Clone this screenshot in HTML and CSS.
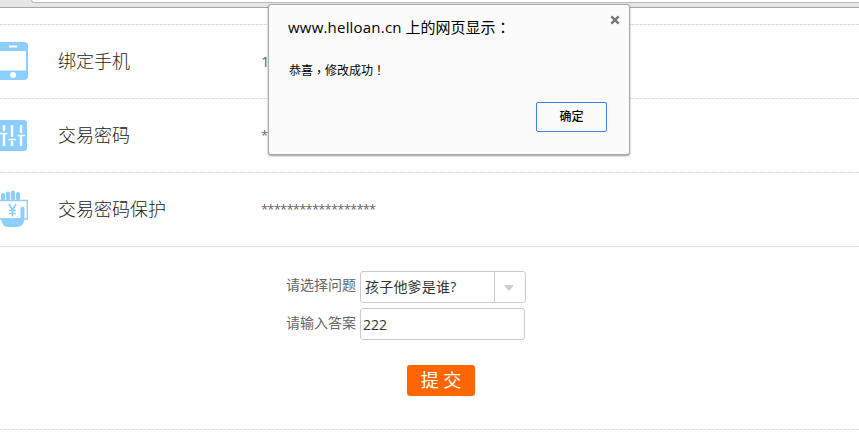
FILE: index.html
```html
<!DOCTYPE html>
<html lang="zh-CN">
<head>
<meta charset="utf-8">
<title>账户安全</title>
<link rel="stylesheet" href="styles.css">
</head>
<body>
<div class="toolbar"><div class="address"></div></div>
<main class="settings">
  <section class="row">
    <svg class="icon" width="28" height="40" viewBox="0 0 28 40">
      <path fill="#8ccfff" d="M0 1h24q4 0 4 4v30q0 4-4 4H0z"/>
      <path fill="#fff" d="M0 10h26v19.500H0zM9 4.500h8v2H9z"/>
      <circle cx="13" cy="34" r="3" fill="#fff"/>
    </svg>
    <h2 class="name">绑定手机</h2>
    <span class="value phone">138</span>
  </section>
  <section class="row">
    <svg class="icon" width="28" height="40" viewBox="0 0 28 40">
      <path fill="#8ccfff" d="M0 5h24q3 0 3 3v25q0 3-3 3H0z"/>
      <path stroke="#fff" stroke-width="2.400" fill="none" d="M4 10v6M4 19v12M12 10v12M12 26v5M21 10v8M21 21v10"/>
      <path stroke="#fff" stroke-width="1.500" fill="none" d="M0 18.500h7.500M8.500 24.500h7.500M17.500 20.500h7.500"/>
    </svg>
    <h2 class="name">交易密码</h2>
    <span class="value">******************</span>
  </section>
  <section class="row">
    <svg class="icon" width="28" height="40" viewBox="0 0 28 40">
      <path stroke="#8ccfff" stroke-width="4.200" stroke-linecap="round" d="M3 6v3.500M8 4.500v5M13 3.500v6M18 5v4.500"/>
      <path fill="#fff" stroke="#8ccfff" stroke-width="1.300" d="M-1 11.500h28.300v18.500H-1z"/>
      <path stroke="#8ccfff" stroke-width="1.700" fill="none" d="M9 15l3.500 6 3.500-6M12.500 21v6.500M9 21.500h7M9 24.500h7"/>
      <path fill="#8ccfff" d="M1 29.500h19.500V20q0-2.500 2-2.500t2 2.500v10q-1 8-8 8H8q-6 0-7-8.500z"/>
    </svg>
    <h2 class="name">交易密码保护</h2>
    <span class="value">******************</span>
  </section>
  <form class="question">
    <div class="field">
      <span class="label">请选择问题</span>
      <div class="select"><span class="choice">孩子他爹是谁?</span><span class="arrow"></span></div>
    </div>
    <div class="field">
      <span class="label low">请输入答案</span>
      <div class="answer">222</div>
    </div>
    <button class="submit" type="button">提 交</button>
  </form>
</main>
<div class="dialog">
  <svg class="close" width="10" height="10" viewBox="0 0 10 10"><path stroke="#777" stroke-width="2.400" d="M1.300 1.300l7.400 7.400M8.700 1.300L1.300 8.700"/></svg>
  <div class="title"><span class="host">www.helloan.cn</span> 上的网页显示<span class="mark" lang="zh-TW">：</span></div>
  <div class="message">恭喜<span class="mark comma" lang="zh-TW">，</span>修改成功<span class="mark" lang="zh-TW">！</span></div>
  <button class="ok" type="button">确定</button>
</div>
</body>
</html>
```
FILE: styles.css
```css
* { box-sizing: border-box; }
body {
  margin: 0;
  height: 440px;
  overflow: hidden;
  background: #fff;
  font-family: "Open Sans", "Noto Sans CJK SC", sans-serif;
  color: #333;
}
.toolbar {
  height: 8px;
  padding-left: 31px;
  background: #e6e6e6;
  border-bottom: 1px solid #a5a5a5;
}
.address {
  height: 3px;
  background: #fff;
  border: solid #bbb;
  border-width: 0 0 1px 1px;
  border-bottom-left-radius: 3px;
}
.settings { padding-top: 16px; }
.row {
  display: flex;
  align-items: center;
  height: 74px;
  background: repeating-linear-gradient(90deg, #dcdcdc 0 3px, #f3f3f3 3px 4px) top / 100% 1px no-repeat;
}
.icon { flex: none; }
.name {
  width: 203px;
  margin: 0 0 0 30px;
  font-size: 18px;
  font-weight: 300;
  line-height: 26px;
  color: #222;
}
.value {
  font-size: 13px;
  line-height: 20px;
  letter-spacing: -.800px;
  color: #666;
}
.phone { font-size: 15px; letter-spacing: 0; }
.question {
  height: 184px;
  padding: 25px 0 0 286px;
  background:
    repeating-linear-gradient(90deg, #dcdcdc 0 3px, #f3f3f3 3px 4px) top / 100% 1px no-repeat,
    repeating-linear-gradient(90deg, #dcdcdc 0 3px, #f3f3f3 3px 4px) bottom / 100% 1px no-repeat;
}
.field {
  display: flex;
  height: 32px;
  margin-bottom: 5px;
}
.label {
  width: 74px;
  font-size: 14px;
  line-height: 28px;
  color: #666;
  white-space: nowrap;
}
.low { line-height: 30px; }
.select, .answer {
  height: 32px;
  border: 1px solid #ccc;
  border-radius: 3px;
  font-size: 14px;
  line-height: 31px;
}
.select { display: flex; width: 166px; }
.choice {
  width: 134px;
  padding-left: 4px;
  border-right: 1px solid #ccc;
  line-height: 29px;
  letter-spacing: .200px;
}
.arrow {
  width: 0;
  height: 0;
  margin: 13px 0 0 9px;
  border: solid transparent;
  border-width: 6px 5px 0;
  border-top-color: #ccc;
}
.answer { width: 165px; padding-left: 2px; }
.submit {
  display: block;
  width: 68px;
  height: 31px;
  margin: 25px 0 0 121px;
  padding: 0;
  border: 0;
  border-radius: 3px;
  background: #f60;
  color: #fff;
  font: 18px/31px "Open Sans", "Noto Sans CJK SC", sans-serif;
}
.dialog {
  position: absolute;
  left: 268px;
  top: 4px;
  width: 362px;
  height: 151px;
  padding: 11px 22px 0 19px;
  background: #fbfbfb;
  border: 1px solid #aaa;
  border-radius: 3px;
  box-shadow: 0 1px 2px rgba(0, 0, 0, .4);
  color: #000;
}
.close { position: absolute; right: 9px; top: 10px; }
.title { height: 22px; font-size: 15px; line-height: 22px; white-space: nowrap; }
.host { letter-spacing: .200px; }
.mark { font-family: "Noto Sans CJK TC", sans-serif; line-height: 1; }
.comma { position: relative; top: 2px; }
.message { height: 20px; margin-top: 23px; padding-left: 1px; font-size: 12px; line-height: 20px; }
.ok {
  display: block;
  width: 71px;
  height: 30px;
  margin: 21px 0 0 auto;
  padding: 0;
  background: #fbfbfb;
  border: 1px solid #4180e8;
  border-radius: 2px;
  color: #000;
  font: 500 12px/28px "Open Sans", "Noto Sans CJK SC", sans-serif;
}
```
